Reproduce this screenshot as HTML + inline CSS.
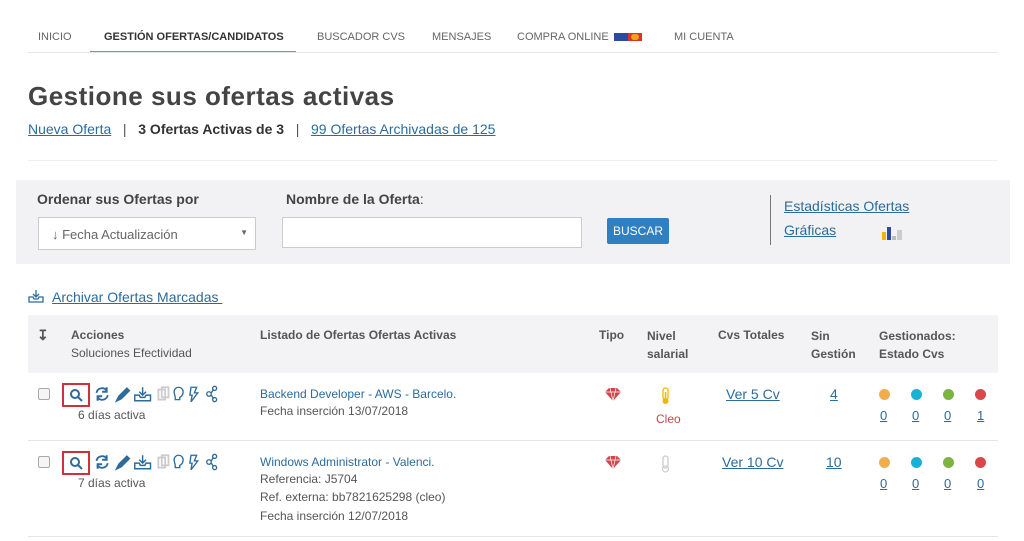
<!DOCTYPE html>
<html><head><meta charset="utf-8"><style>
*{margin:0;padding:0;box-sizing:border-box}
body{width:1024px;height:541px;background:#fff;font-family:"Liberation Sans",Arial,sans-serif;color:#444;position:relative;overflow:hidden}
.a{position:absolute;white-space:nowrap}
.nav{font-size:11px;color:#666;top:31px}
.lk{color:#2d6b9b;text-decoration:underline}
.h{font-size:12px;font-weight:bold;color:#555}
.s{font-size:12px;color:#555}
.dot{position:absolute;width:11px;height:11px;border-radius:50%}
.n{font-size:13px;color:#2d6b9b;text-decoration:underline}
</style></head><body>
<div class="a nav" style="left:38px">INICIO</div>
<div class="a nav" style="left:104px;color:#333;font-weight:bold">GESTIÓN OFERTAS/CANDIDATOS</div>
<div class="a" style="left:90px;top:51px;width:206px;height:2px;background:#3bb3b8"></div>
<div class="a" style="left:28px;top:52px;width:970px;height:1px;background:#e6e6e6"></div>
<div class="a nav" style="left:317px">BUSCADOR CVS</div>
<div class="a nav" style="left:432px">MENSAJES</div>
<div class="a nav" style="left:517px">COMPRA ONLINE</div>
<div class="a" style="left:614px;top:33px;width:14px;height:8px;background:#2b4c9a"></div>
<div class="a" style="left:628px;top:33px;width:14px;height:8px;background:#d8352a"><div style="margin:1px 3px;width:8px;height:6px;background:#f2a21c;border-radius:3px"></div></div>
<div class="a nav" style="left:674px">MI CUENTA</div>

<div class="a" style="left:28px;top:81px;font-size:26px;font-weight:bold;color:#444;letter-spacing:0.5px">Gestione sus ofertas activas</div>
<div class="a" style="left:28px;top:121px;font-size:14px;color:#555"><span class="lk">Nueva Oferta</span> &nbsp;&nbsp;|&nbsp;&nbsp; <b style="color:#333">3 Ofertas Activas de 3</b> &nbsp;&nbsp;|&nbsp;&nbsp; <span class="lk">99 Ofertas Archivadas de 125</span></div>
<div class="a" style="left:28px;top:160px;width:970px;height:1px;background:#eee"></div>

<div class="a" style="left:16px;top:180px;width:994px;height:84px;background:#f2f1f4"></div>
<div class="a" style="left:37px;top:191px;font-size:14px;font-weight:bold;color:#444">Ordenar sus Ofertas por</div>
<div class="a" style="left:286px;top:191px;font-size:14px;font-weight:bold;color:#444">Nombre de la Oferta<span style="font-weight:normal">:</span></div>
<div class="a" style="left:38px;top:217px;width:218px;height:33px;background:#fff;border:1px solid #ccc;font-size:13px;color:#666;padding:9px 0 0 13px">↓ Fecha Actualización<span style="position:absolute;right:7px;top:10px;font-size:8px">▼</span></div>
<div class="a" style="left:282px;top:217px;width:300px;height:31px;background:#fff;border:1px solid #ccc"></div>
<div class="a" style="left:607px;top:218px;width:62px;height:26px;background:#2f7fc1;color:#fff;font-size:12px;text-align:center;line-height:26px;border-radius:2px">BUSCAR</div>
<div class="a" style="left:770px;top:195px;width:1px;height:50px;background:#777"></div>
<div class="a" style="left:784px;top:198px;font-size:14px"><span class="lk">Estadísticas Ofertas</span></div>
<div class="a" style="left:784px;top:222px;font-size:14px"><span class="lk">Gráficas</span></div>
<div class="a" style="left:882px;top:232px;width:4px;height:8px;background:#f2b705"></div>
<div class="a" style="left:887px;top:227px;width:4px;height:13px;background:#2b4c9a"></div>
<div class="a" style="left:892px;top:236px;width:4px;height:4px;background:#bbb"></div>
<div class="a" style="left:897px;top:230px;width:5px;height:10px;background:#ccc"></div>

<svg class="a" style="left:28px;top:289px" width="16" height="14" viewBox="0 0 16 14" fill="none" stroke="#2d6b9b" stroke-width="1.3"><path d="M8 1v7M5 5l3 3 3-3M1 8v5h14V8h-4l-1 2H6L5 8z"/></svg>
<div class="a" style="left:52px;top:289px;font-size:14px"><span class="lk">Archivar Ofertas Marcadas&nbsp;</span></div>

<div class="a" style="left:28px;top:315px;width:970px;height:58px;background:#f3f3f5"></div>
<div class="a h" style="left:37px;top:327px;font-size:14px">↧</div>
<div class="a h" style="left:71px;top:328px">Acciones</div>
<div class="a s" style="left:71px;top:346px">Soluciones Efectividad</div>
<div class="a h" style="left:260px;top:328px">Listado de Ofertas Ofertas Activas</div>
<div class="a h" style="left:599px;top:328px">Tipo</div>
<div class="a h" style="left:647px;top:327px;line-height:18px">Nivel<br>salarial</div>
<div class="a h" style="left:718px;top:328px">Cvs Totales</div>
<div class="a h" style="left:811px;top:327px;line-height:18px">Sin<br>Gestión</div>
<div class="a h" style="left:879px;top:327px;line-height:18px">Gestionados:<br>Estado Cvs</div>

<div class="a" style="left:28px;top:440px;width:970px;height:1px;background:#e4e4e4"></div>
<div class="a" style="left:28px;top:536px;width:970px;height:1px;background:#e4e4e4"></div>

<!-- row 1 -->
<div class="a" style="left:38px;top:388px;width:12px;height:12px;border:1px solid #aaa;border-radius:2px;background:#f5f5f5"></div>
<div class="a" style="left:62px;top:383px;width:28px;height:24px;border:2px solid #d0303a"></div>
<svg class="a" style="left:69px;top:388px" width="14" height="14" viewBox="0 0 14 14" fill="none" stroke="#2d6b9b" stroke-width="2"><circle cx="6" cy="6" r="4"/><path d="M9 9l4 4"/></svg>
<svg class="a" style="left:91px;top:385px" width="128" height="18" viewBox="0 0 110 16" fill="none" stroke="#2d6b9b" stroke-width="1.6">
<path d="M3 7a5 5 0 0 1 9-2M13 9a5 5 0 0 1-9 2"/><path d="M12 2v4h-4M4 14v-4h4" stroke-width="1.8"/>
<path d="M21 14l2-4 7-7 2 2-7 7z" fill="#2d6b9b"/>
<path d="M44 2v7M41 6l3 3 3-3M37 9v5h14V9h-4l-1 2h-4l-1-2z" stroke-width="1.3"/>
<rect x="58" y="4" width="6" height="9" stroke="#ccc"/><rect x="61" y="2" width="6" height="9" stroke="#ccc"/>
<path d="M73 11v2h4v-2c2-1 3-3 3-5a4 4 0 0 0-8 0c0 2 1 4 1 5z" stroke-width="1.2"/>
<path d="M87 2h5l-2 5h3l-6 8 1-6h-2z" stroke-width="1.2"/>
<circle cx="103" cy="8" r="2" stroke-width="1.2"/><circle cx="108" cy="3" r="1.8" stroke-width="1.2"/><circle cx="108" cy="13" r="1.8" stroke-width="1.2"/><path d="M105 7l2-3M105 9l2 3" stroke-width="1.2"/>
</svg>
<div class="a s" style="left:78px;top:408px">6 días activa</div>
<div class="a" style="left:260px;top:387px;font-size:12px;color:#2d6b9b">Backend Developer - AWS - Barcelo.</div>
<div class="a s" style="left:260px;top:404px">Fecha inserción 13/07/2018</div>
<svg class="a" style="left:605px;top:388px" width="16" height="13" viewBox="0 0 16 13"><path d="M4 0h8l4 4-8 9-8-9z" fill="#d0464a"/><path d="M0 4h16M5 0l3 13M11 0l-3 13" stroke="#fff" stroke-width=".7"/></svg>
<svg class="a" style="left:661px;top:387px" width="9" height="18" viewBox="0 0 9 18"><rect x="2" y="1" width="5" height="12" rx="2.5" fill="none" stroke="#f2b705" stroke-width="1.3"/><circle cx="4.5" cy="14" r="3" fill="#f2b705"/><rect x="3.7" y="5" width="1.6" height="8" fill="#f2b705"/></svg>
<div class="a" style="left:656px;top:412px;font-size:12px;color:#c6474b">Cleo</div>
<div class="a n" style="left:726px;top:386px;font-size:14px">Ver 5 Cv</div>
<div class="a n" style="left:830px;top:386px;font-size:14px">4</div>
<div class="dot" style="left:879px;top:389px;background:#f0ad4e"></div>
<div class="dot" style="left:911px;top:389px;background:#1ab2d3"></div>
<div class="dot" style="left:943px;top:389px;background:#7cb342"></div>
<div class="dot" style="left:975px;top:389px;background:#d9474b"></div>
<div class="a n" style="left:880px;top:408px">0</div><div class="a n" style="left:912px;top:408px">0</div><div class="a n" style="left:944px;top:408px">0</div><div class="a n" style="left:977px;top:408px">1</div>

<!-- row 2 -->
<div class="a" style="left:38px;top:456px;width:12px;height:12px;border:1px solid #aaa;border-radius:2px;background:#f5f5f5"></div>
<div class="a" style="left:62px;top:451px;width:28px;height:24px;border:2px solid #d0303a"></div>
<svg class="a" style="left:69px;top:456px" width="14" height="14" viewBox="0 0 14 14" fill="none" stroke="#2d6b9b" stroke-width="2"><circle cx="6" cy="6" r="4"/><path d="M9 9l4 4"/></svg>
<svg class="a" style="left:91px;top:453px" width="128" height="18" viewBox="0 0 110 16" fill="none" stroke="#2d6b9b" stroke-width="1.6">
<path d="M3 7a5 5 0 0 1 9-2M13 9a5 5 0 0 1-9 2"/><path d="M12 2v4h-4M4 14v-4h4" stroke-width="1.8"/>
<path d="M21 14l2-4 7-7 2 2-7 7z" fill="#2d6b9b"/>
<path d="M44 2v7M41 6l3 3 3-3M37 9v5h14V9h-4l-1 2h-4l-1-2z" stroke-width="1.3"/>
<rect x="58" y="4" width="6" height="9" stroke="#ccc"/><rect x="61" y="2" width="6" height="9" stroke="#ccc"/>
<path d="M73 11v2h4v-2c2-1 3-3 3-5a4 4 0 0 0-8 0c0 2 1 4 1 5z" stroke-width="1.2"/>
<path d="M87 2h5l-2 5h3l-6 8 1-6h-2z" stroke-width="1.2"/>
<circle cx="103" cy="8" r="2" stroke-width="1.2"/><circle cx="108" cy="3" r="1.8" stroke-width="1.2"/><circle cx="108" cy="13" r="1.8" stroke-width="1.2"/><path d="M105 7l2-3M105 9l2 3" stroke-width="1.2"/>
</svg>
<div class="a s" style="left:78px;top:476px">7 días activa</div>
<div class="a" style="left:260px;top:455px;font-size:12px;color:#2d6b9b">Windows Administrator - Valenci.</div>
<div class="a s" style="left:260px;top:472px">Referencia: J5704</div>
<div class="a s" style="left:260px;top:490px">Ref. externa: bb7821625298 (cleo)</div>
<div class="a s" style="left:260px;top:509px">Fecha inserción 12/07/2018</div>
<svg class="a" style="left:605px;top:456px" width="16" height="13" viewBox="0 0 16 13"><path d="M4 0h8l4 4-8 9-8-9z" fill="#d0464a"/><path d="M0 4h16M5 0l3 13M11 0l-3 13" stroke="#fff" stroke-width=".7"/></svg>
<svg class="a" style="left:661px;top:455px" width="9" height="18" viewBox="0 0 9 18"><rect x="2" y="1" width="5" height="12" rx="2.5" fill="none" stroke="#ccc" stroke-width="1.3"/><circle cx="4.5" cy="14" r="3" fill="none" stroke="#ccc" stroke-width="1.2"/></svg>
<div class="a n" style="left:722px;top:454px;font-size:14px">Ver 10 Cv</div>
<div class="a n" style="left:826px;top:454px;font-size:14px">10</div>
<div class="dot" style="left:879px;top:457px;background:#f0ad4e"></div>
<div class="dot" style="left:911px;top:457px;background:#1ab2d3"></div>
<div class="dot" style="left:943px;top:457px;background:#7cb342"></div>
<div class="dot" style="left:975px;top:457px;background:#d9474b"></div>
<div class="a n" style="left:880px;top:476px">0</div><div class="a n" style="left:912px;top:476px">0</div><div class="a n" style="left:944px;top:476px">0</div><div class="a n" style="left:977px;top:476px">0</div>
</body></html>
